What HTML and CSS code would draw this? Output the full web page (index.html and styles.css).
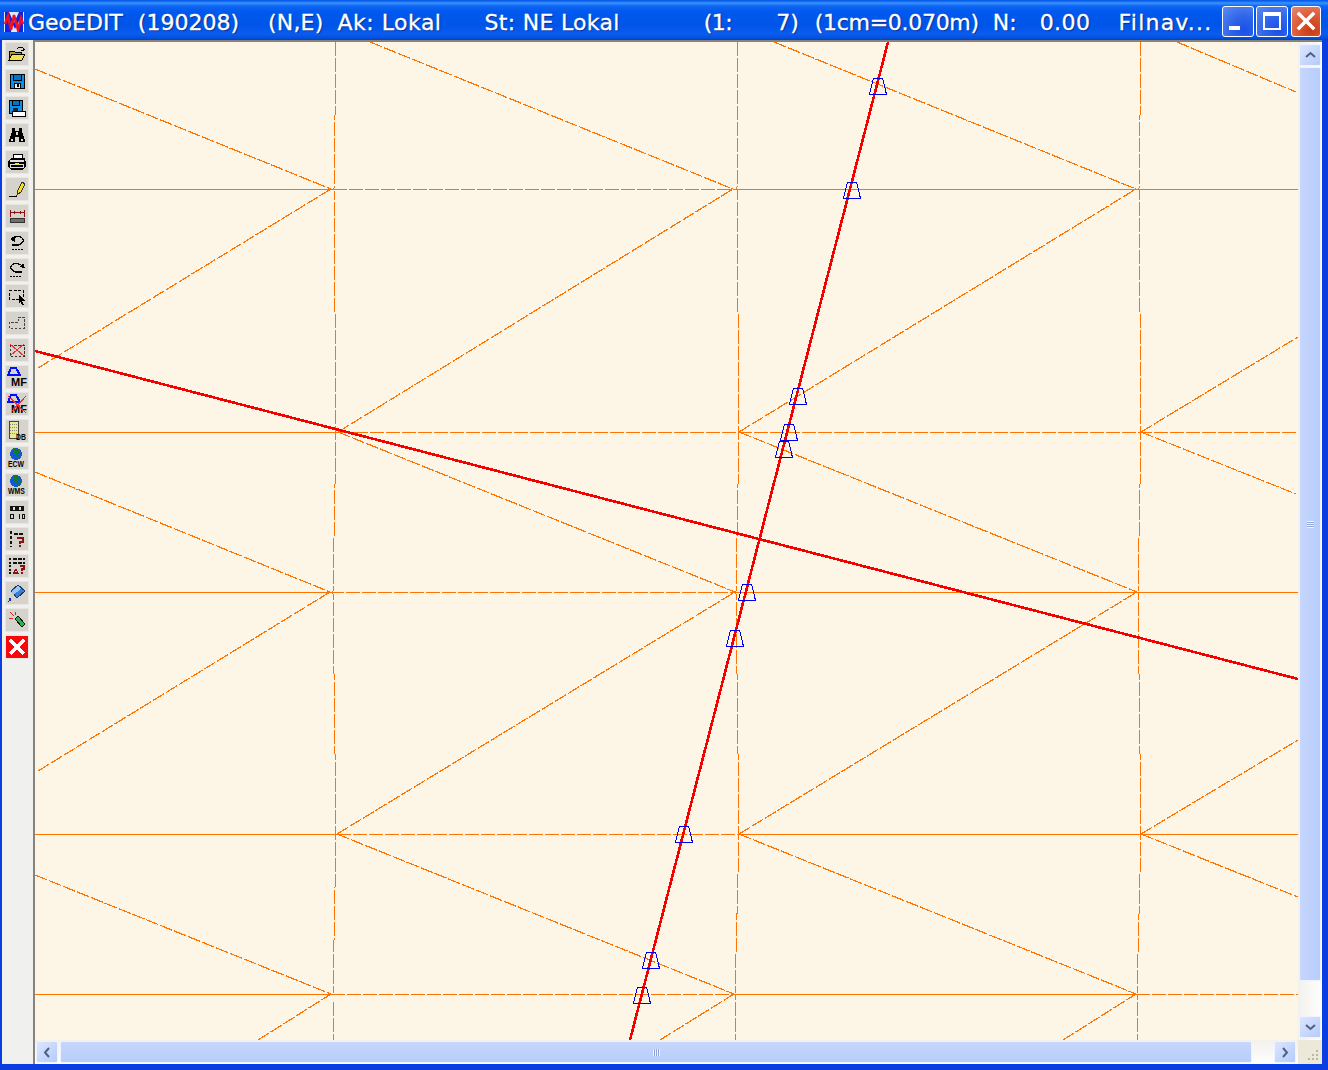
FILE: index.html
```html
<!DOCTYPE html>
<html lang="en">
<head>
    <meta charset="UTF-8">
    <title>GeoEDIT</title>
    <link rel="stylesheet" href="styles.css">
</head>
<body>

<div class="window">
    <div class="titlebar">
        <svg class="logo" width="20" height="20" viewBox="0 0 20 20">
            <rect width="20" height="20" fill="#dfe8ff"/>
            <path class="logo-blue" d="M1 20V0h4l5 11 5-11h4v20h-4V9l-4 8-4-8v11z"/>
            <path class="logo-red" d="M1 12l3-8 3 14 3-15 4 15 3-12 2 6"/>
        </svg>
        <div class="title-text">
            <span class="t-name">GeoEDIT</span>
            <span class="t-ver">(190208)</span>
            <span class="t-ne">(N,E)</span>
            <span class="t-ak">Ak: Lokal</span>
            <span class="t-st">St: NE Lokal</span>
            <span class="t-sc">(1:</span>
            <span class="t-sv">7)</span>
            <span class="t-cm">(1cm=0.070m)</span>
            <span class="t-n">N:</span>
            <span class="t-nv">0.00</span>
            <span class="t-file">Filnav...</span>
        </div>
        <div class="caption-buttons">
            <button class="cap"><span class="cap-min"></span></button>
            <button class="cap"><span class="cap-max"></span></button>
            <button class="cap close">
                <svg width="20" height="20" viewBox="0 0 20 20"><path d="M3 3l14 14M17 3L3 17" stroke="#fff" stroke-width="3.4" stroke-linecap="square"/></svg>
            </button>
        </div>
    </div>

    <div class="body">
        <div class="toolbar">
            <!-- open -->
            <div class="tool"><svg width="18" height="18" viewBox="0 0 18 18">
                <path d="M1 6h5l1 1h6v2H5l-3 6H1z" fill="#b59a2a" stroke="#000"/>
                <path d="M4 9h13l-3 6H1z" fill="#f2e34a" stroke="#000"/>
                <path d="M9 4q3-3 6-1M15 3v3M13 5l2 1 2-2" fill="none" stroke="#000"/>
            </svg></div>
            <!-- save -->
            <div class="tool"><svg width="18" height="18" viewBox="0 0 18 18">
                <path d="M2 2h14v14H2z" fill="#0c8fe8" stroke="#000"/>
                <path d="M5 2h8v6H5z" fill="#0a70c0" stroke="#000"/>
                <path d="M6 11h6v5H6z" fill="#eee" stroke="#000"/>
                <path d="M9 12h2v3H9z" fill="#000"/>
            </svg></div>
            <!-- save as -->
            <div class="tool"><svg width="18" height="18" viewBox="0 0 18 18">
                <path d="M1 1h13v13H1z" fill="#0c8fe8" stroke="#000"/>
                <path d="M4 1h7v5H4z" fill="#0a70c0" stroke="#000"/>
                <path d="M5 9h5v5H5z" fill="#222"/>
                <path d="M4 12h13v5H4z" fill="#fff" stroke="#000"/>
            </svg></div>
            <!-- find -->
            <div class="tool"><svg width="18" height="18" viewBox="0 0 18 18">
                <path d="M4 2h3v3h4V2h3v4l3 8v2h-6v-5H7v5H1v-2l3-8z" fill="#000"/>
                <path d="M3 13h2v2H3zM13 13h2v2h-2zM8 6h2v3H8z" fill="#ddd"/>
            </svg></div>
            <!-- print -->
            <div class="tool"><svg width="18" height="18" viewBox="0 0 18 18">
                <path d="M6 1h8l1 5H5z" fill="#fff" stroke="#000"/>
                <path d="M3 6h13l1 3v5l-2 2H3l-2-2V8z" fill="#ddd" stroke="#000" stroke-width="1.400"/>
                <path d="M2 10h14M3 13h12" stroke="#000" stroke-width="1.400"/>
                <path d="M7 10h4v1.500H7z" fill="#f2e34a"/>
            </svg></div>
            <!-- draw -->
            <div class="tool"><svg width="18" height="18" viewBox="0 0 18 18">
                <path d="M1 16h8" stroke="#000" fill="none"/>
                <path d="M9 15l1-5 4-8 3 2-4 8z" fill="#f5e020" stroke="#333"/>
            </svg></div>
            <!-- measure -->
            <div class="tool"><svg width="18" height="18" viewBox="0 0 18 18">
                <path d="M2 3v7M16 3v7M2 5h14M6 3.500v3M12 3.500v3" stroke="#8b1010" fill="none"/>
                <path d="M2 11h14v4H2z" fill="#6f6f6f" stroke="#333"/>
            </svg></div>
            <!-- undo -->
            <div class="tool"><svg width="18" height="18" viewBox="0 0 18 18">
                <path d="M5 4q5-3 9 0t-3 7H4" fill="none" stroke="#000" stroke-width="1.300"/>
                <path d="M2 5l5-3v6z" fill="#000"/>
                <path d="M4 15h12" stroke="#000" stroke-dasharray="2 1"/>
            </svg></div>
            <!-- redo -->
            <div class="tool"><svg width="18" height="18" viewBox="0 0 18 18">
                <path d="M13 4q-5-3-9 0t3 7h7" fill="none" stroke="#000" stroke-width="1.300"/>
                <path d="M17 7l-6-1 4-4z" fill="#000"/>
                <path d="M2 15h12" stroke="#000" stroke-dasharray="2 1"/>
            </svg></div>
            <!-- select -->
            <div class="tool"><svg width="18" height="18" viewBox="0 0 18 18">
                <path d="M1 3h14v9H1z" fill="none" stroke="#000" stroke-dasharray="3 1.500"/>
                <path d="M11 8l6 6-3 .5 2 3-1.500 .5-2-3-1.500 2z" fill="#000"/>
            </svg></div>
            <!-- partial select -->
            <div class="tool"><svg width="18" height="18" viewBox="0 0 18 18">
                <path d="M10 3h6v11H1V8h9z" fill="none" stroke="#444" stroke-dasharray="2.500 1.500"/>
            </svg></div>
            <!-- clear select -->
            <div class="tool"><svg width="18" height="18" viewBox="0 0 18 18">
                <path d="M2 4h14v11H2z" fill="none" stroke="#333" stroke-dasharray="2.500 1.500"/>
                <path d="M2 3l14 12M16 3L2 15" stroke="#f03030" fill="none"/>
            </svg></div>
            <!-- mark MF -->
            <div class="tool"><svg width="22" height="22" viewBox="0 0 22 22">
                <path d="M5 2h5l4 7H2z" fill="none" stroke="#0010ff" stroke-width="2"/>
                <text class="tool-label" x="5" y="20">MF</text>
            </svg></div>
            <!-- remove MF -->
            <div class="tool"><svg width="22" height="22" viewBox="0 0 22 22">
                <path d="M5 2h5l4 7H2z" fill="none" stroke="#0010ff" stroke-width="2"/>
                <text class="tool-label" x="5" y="20">MF</text>
                <path d="M2 3l18 17M20 3L6 18" stroke="#f03030" stroke-width="1.200"/>
            </svg></div>
            <!-- DB -->
            <div class="tool"><svg width="22" height="22" viewBox="0 0 22 22">
                <path d="M3 1h9v17H3z" fill="#ecec90" stroke="#444"/>
                <path d="M4 4h7M4 7h7M4 10h7M4 13h7" stroke="#888" stroke-dasharray="1 1"/>
                <text class="tool-label small" transform="translate(10 19.500) scale(.72 1)">DB</text>
            </svg></div>
            <!-- ECW -->
            <div class="tool"><svg width="22" height="22" viewBox="0 0 22 22">
                <circle cx="10" cy="7" r="6" fill="#1058d8"/>
                <path d="M7 1q5 0 7 3l-3 5-4-3zM12 9l3-1-2 4z" fill="#127a28"/>
                <text class="tool-label small" transform="translate(2 19.500) scale(.72 1)">ECW</text>
            </svg></div>
            <!-- WMS -->
            <div class="tool"><svg width="22" height="22" viewBox="0 0 22 22">
                <circle cx="10" cy="7" r="6" fill="#1058d8"/>
                <path d="M7 1q5 0 7 3l-3 5-4-3zM12 9l3-1-2 4z" fill="#127a28"/>
                <text class="tool-label small" transform="translate(2 19.500) scale(.72 1)">WMS</text>
            </svg></div>
            <!-- table -->
            <div class="tool"><svg width="18" height="18" viewBox="0 0 18 18">
                <path d="M2 3h14v5H2z" fill="#111"/>
                <path d="M5 4h2v3H5zM11 4h2v3h-2z" fill="#ddd"/>
                <path d="M2.500 11.500h3v4h-3zM11 11v5M14 11.500h2.500v4H14z" fill="none" stroke="#111"/>
            </svg></div>
            <!-- query -->
            <div class="tool"><svg width="18" height="18" viewBox="0 0 18 18">
                <path d="M3 1v16" stroke="#111" stroke-width="2" stroke-dasharray="3 2" fill="none"/>
                <path d="M6 4h10" stroke="#111" stroke-width="2" stroke-dasharray="4 1"/>
                <path d="M9 8h6v4h-3v2M12 15v2" fill="none" stroke="#8b1010" stroke-width="2"/>
            </svg></div>
            <!-- query list -->
            <div class="tool"><svg width="18" height="18" viewBox="0 0 18 18">
                <path d="M2 1v16" stroke="#111" stroke-width="2" stroke-dasharray="2 1.500" fill="none"/>
                <path d="M5 2h12M5 6h12" stroke="#111" stroke-width="2" stroke-dasharray="4 1"/>
                <path d="M6 16l2-4 2 4z" fill="none" stroke="#8b1010" stroke-width="1.300"/>
                <path d="M12 9h4v3h-2v2M14 15v2" fill="none" stroke="#8b1010" stroke-width="1.600"/>
            </svg></div>
            <!-- eraser -->
            <div class="tool"><svg width="18" height="18" viewBox="0 0 18 18">
                <path d="M10 1l7 6-8 7-6-7z" fill="#3d7fd6" stroke="#123a70"/>
                <path d="M10 2l3 3-8 6-2-3z" fill="#9cc6f2"/>
                <path d="M2 14l-1 3 2-1z" fill="#0828c8" stroke="#0828c8"/>
            </svg></div>
            <!-- wand -->
            <div class="tool"><svg width="18" height="18" viewBox="0 0 18 18">
                <path d="M7 8l3-3 7 8-3 3z" fill="#36b04c" stroke="#111"/>
                <path d="M2 1l4 4M1 8l4-1M7 1l0 3" stroke="#e02020"/>
            </svg></div>
            <!-- close -->
            <div class="tool"><svg class="tool-stop" width="22" height="22" viewBox="0 0 22 22">
                <rect width="22" height="22" fill="#f40a0a"/>
                <path d="M4 4l14 14M18 4L4 18" stroke="#fff" stroke-width="3.400"/>
            </svg></div>
        </div>

        <div class="main">
            <svg class="canvas" width="1263" height="998" viewBox="35 42 1263 998">
                <defs>
                    <path id="mark" d="M-4.500 -8H4.500L8.500 8.500H-8.500Z"/>
                </defs>

                <!-- grid rows: each cell edge is either solid or dashed -->
                <g class="grid">
                    <path d="M35 189.500H333M733 189.500H1298"/>
                    <path d="M35 432.500H338"/>
                    <path d="M35 592.500H330M735 592.500H1298"/>
                    <path d="M35 834.500H337M739 834.500H1298"/>
                    <path d="M35 994.500H331M734 994.500H1136"/>
                </g>
                <g class="grid row">
                    <path d="M333 189.500H733"/>
                    <path d="M338 432.500H1298"/>
                    <path d="M330 592.500H735"/>
                    <path d="M337 834.500H739"/>
                    <path d="M331 994.500H734M1136 994.500H1298"/>
                </g>
                <!-- grid columns -->
                <g class="grid col">
                    <path d="M336 42L334 189 336 432 333 592 336 834 333 994V1040"/>
                    <path d="M738 42L737 189 739 432 736 592 739 834 735 994V1040"/>
                    <path d="M1141 42L1139 189 1141 432 1138 592 1141 834 1137 994V1040"/>
                </g>
                <!-- diagonals -->
                <g class="grid diag">
                    <path d="M35 69L331 189"/>
                    <path d="M370 42L733 189"/>
                    <path d="M774 42L1136 189"/>
                    <path d="M1177 42L1296 92"/>
                    <path d="M38 368L331 189"/>
                    <path d="M338 432L733 189"/>
                    <path d="M739 432L1136 189"/>
                    <path d="M1141 432L1298 337"/>
                    <path d="M35 472L330 592"/>
                    <path d="M338 432L735 592"/>
                    <path d="M739 432L1137 592"/>
                    <path d="M1141 432L1296 494"/>
                    <path d="M38 771L330 592"/>
                    <path d="M337 834L735 592"/>
                    <path d="M739 834L1137 592"/>
                    <path d="M1141 834L1298 740"/>
                    <path d="M35 875L331 994"/>
                    <path d="M337 834L734 994"/>
                    <path d="M739 834L1136 994"/>
                    <path d="M1141 834L1298 897"/>
                    <path d="M258 1040L331 994"/>
                    <path d="M660 1040L734 994"/>
                    <path d="M1063 1040L1136 994"/>
                </g>

                <!-- profile lines -->
                <g class="profile">
                    <path d="M35 351L1298 679"/>
                    <path d="M888 42L630 1040"/>
                </g>

                <!-- points -->
                <g class="marks">
                    <use href="#mark" x="878" y="86"/>
                    <use href="#mark" x="852" y="190"/>
                    <use href="#mark" x="798" y="396"/>
                    <use href="#mark" x="789" y="432"/>
                    <use href="#mark" x="784" y="449"/>
                    <use href="#mark" x="747" y="592"/>
                    <use href="#mark" x="735" y="638"/>
                    <use href="#mark" x="684" y="834"/>
                    <use href="#mark" x="651" y="960"/>
                    <use href="#mark" x="642" y="995"/>
                </g>
            </svg>

            <div class="vscroll">
                <div class="sb-btn"><svg width="11" height="8" viewBox="0 0 11 8"><path d="M1 6l4.500-4L10 6" class="chev"/></svg></div>
                <div class="sb-thumb vthumb"><span class="vgrip"></span></div>
                <div class="sb-track"></div>
                <div class="sb-btn"><svg width="11" height="8" viewBox="0 0 11 8"><path d="M1 2l4.500 4L10 2" class="chev"/></svg></div>
            </div>
            <div class="hscroll">
                <div class="sb-btn"><svg width="8" height="11" viewBox="0 0 8 11"><path d="M6 1L2 5.500 6 10" class="chev"/></svg></div>
                <div class="sb-thumb hthumb"><span class="hgrip"></span></div>
                <div class="sb-track"></div>
                <div class="sb-btn"><svg width="8" height="11" viewBox="0 0 8 11"><path d="M2 1l4 4.500L2 10" class="chev"/></svg></div>
            </div>
            <div class="corner">
                <svg width="16" height="16" viewBox="0 0 16 16"><path d="M11 3h2v2h-2zM7 7h2v2H7zM11 7h2v2h-2zM3 11h2v2H3zM7 11h2v2H7zM11 11h2v2h-2z" fill="#b9b6a5"/></svg>
            </div>
        </div>
    </div>
</div>

</body>
</html>
```

FILE: styles.css
```css
* { box-sizing: border-box; }

html, body {
    margin: 0;
    padding: 0;
    overflow: hidden;
}

.window {
    width: 1328px;
    height: 1070px;
    display: flex;
    flex-direction: column;
    background: #0a3ee0;
    padding: 0 6px 6px 2px;
}

/* title bar */
.titlebar {
    height: 40px;
    margin: 0 -6px 0 -2px;
    padding-left: 4px;
    display: flex;
    align-items: center;
    background: linear-gradient(to bottom, #0a58e0 0, #0a62f0 1px, #3a93ff 3px, #0f66f2 6px, #0058ee 12px, #0055e8 26px, #0a5cf0 34px, #0450dc 38px, #0340c8 40px);
    color: #fff;
}
.logo { flex: none; margin-top: 4px; }
.logo-blue { fill: #1420e0; }
.logo-red { fill: none; stroke: #f01020; stroke-width: 2.500; }
.title-text {
    margin-left: 4px;
    padding-top: 5px;
    display: flex;
    font-family: "DejaVu Sans", sans-serif;
    font-size: 22px;
    white-space: pre;
    text-shadow: 1px 1px 1px #0a2a90;
    -webkit-text-stroke: 0.3px #fff;
}
.t-ver { margin-left: 15px; }
.t-ne { margin-left: 29px; letter-spacing: 0.2px; }
.t-ak { margin-left: 14px; letter-spacing: 0.5px; }
.t-st { margin-left: 43px; letter-spacing: 0.3px; }
.t-sc { margin-left: 84px; letter-spacing: -0.5px; }
.t-sv { margin-left: 44px; }
.t-cm { margin-left: 16px; letter-spacing: -0.3px; }
.t-n { margin-left: 14px; }
.t-nv { margin-left: 23px; letter-spacing: 0.5px; }
.t-file { margin-left: 28px; letter-spacing: 1.200px; }
.caption-buttons {
    margin-left: auto;
    margin-right: 7px;
    display: flex;
    gap: 2px;
    margin-top: 2px;
}
.cap {
    width: 32px;
    height: 31px;
    padding: 0;
    border: 1px solid #fff;
    border-radius: 3px;
    background: radial-gradient(circle at 70% 80%, #1a50e8 0, #2f66ea 45%, #5f8af0 100%);
    display: flex;
    align-items: center;
    justify-content: center;
}
.cap.close {
    margin-left: 1px;
    width: 30px;
    background: radial-gradient(circle at 70% 80%, #c83a10 0, #dc5a38 50%, #e88a70 100%);
}
.cap-min {
    width: 11px;
    height: 4px;
    background: #fff;
    align-self: flex-end;
    margin: 0 8px 6px 0;
}
.cap-max {
    width: 18px;
    height: 18px;
    border: 2px solid #fff;
    border-top-width: 4px;
}

/* left toolbar */
.body {
    flex: 1;
    display: flex;
    min-height: 0;
}
.toolbar {
    width: 31px;
    background: #f0f0ee;
    padding: 3px 0 0 4px;
    display: flex;
    flex-direction: column;
    gap: 4.950px;
}
.tool {
    width: 22px;
    height: 22px;
    flex: none;
    background: #d6d3cc;
    display: flex;
    align-items: center;
    justify-content: center;
    box-shadow: 0 0 0 1px #e8e6df;
}
.tool svg { shape-rendering: crispEdges; }
.tool-label {
    font-family: "Liberation Sans", sans-serif;
    font-size: 11px;
    font-weight: 700;
    fill: #000;
}
.tool-label.small { font-size: 9.500px; }

/* drawing area */
.main {
    flex: 1;
    display: grid;
    grid-template-columns: 1263px 24px;
    grid-template-rows: 998px 24px;
    border-left: 2px solid #85837a;
    border-top: 2px solid #85837a;
}
.canvas {
    display: block;
    background: #fdf5e6;
}
.grid path {
    fill: none;
    stroke: #ff7400;
    stroke-width: 1;
    shape-rendering: crispEdges;
}
.grid.row path { stroke-dasharray: 14 2; }
.grid.col path { stroke-dasharray: 14 2; }
.grid.diag path { stroke-dasharray: 13 2; stroke-width: 1.200; }
.profile path {
    fill: none;
    stroke: #f40000;
    stroke-width: 2.600;
    shape-rendering: crispEdges;
}
.marks use {
    fill: none;
    stroke: #0000f0;
    stroke-width: 1;
    shape-rendering: crispEdges;
}

/* scrollbars */
.vscroll, .hscroll {
    display: flex;
    background: linear-gradient(to right, #f3f1ec, #fefefe);
}
.vscroll {
    flex-direction: column;
    padding: 2px 1px 2px 1px;
    gap: 1px;
}
.hscroll {
    padding: 1px 2px 1px 1px;
    gap: 2px;
    background: linear-gradient(to bottom, #f3f1ec, #fefefe);
}
.sb-btn {
    flex: none;
    width: 22px;
    height: 22px;
    border: 1px solid #eef3ff;
    border-radius: 2px;
    background: linear-gradient(135deg, #dbe6ff, #b6cbfa);
    display: flex;
    align-items: center;
    justify-content: center;
}
.chev {
    fill: none;
    stroke: #4d6185;
    stroke-width: 2;
}
.sb-thumb {
    border: 1px solid #eef3ff;
    border-radius: 2px;
    display: flex;
    align-items: center;
    justify-content: center;
}
.vthumb {
    height: 914px;
    background: linear-gradient(to right, #c6d6fc, #b8cdfb);
}
.hthumb {
    width: 1192px;
    background: linear-gradient(to bottom, #c6d6fc, #b8cdfb);
}
.sb-track { flex: 1; }
.vgrip {
    width: 7px;
    height: 7px;
    background: repeating-linear-gradient(to bottom, #eef3ff 0 1px, #8fa6d8 1px 2px);
}
.hgrip {
    width: 7px;
    height: 7px;
    background: repeating-linear-gradient(to right, #eef3ff 0 1px, #8fa6d8 1px 2px);
}
.corner {
    background: #ece9d8;
    display: flex;
    align-items: flex-end;
    justify-content: flex-end;
    padding: 0 1px 1px 0;
}
```
